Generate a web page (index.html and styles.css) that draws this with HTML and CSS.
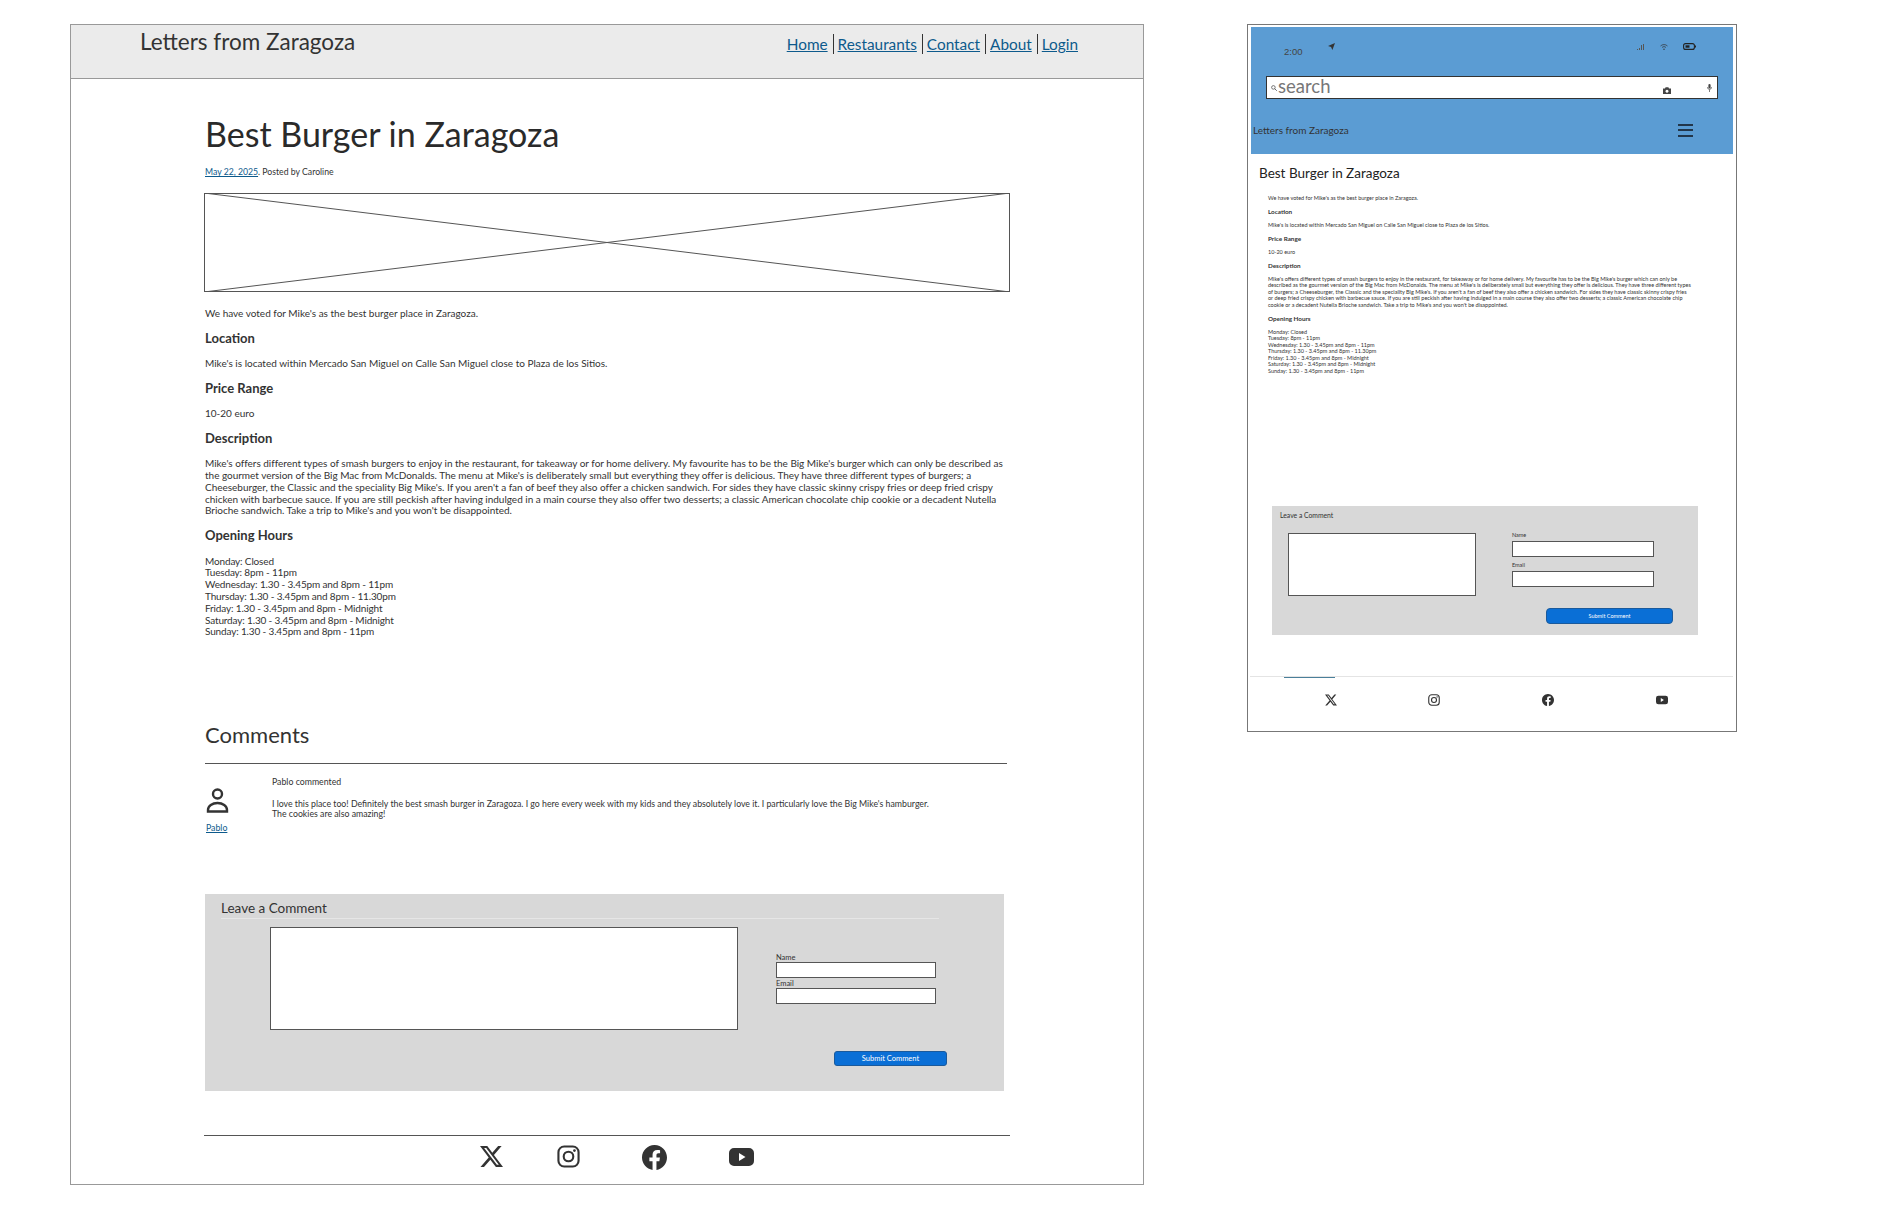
FILE: index.html
```html
<!DOCTYPE html>
<html lang="en">
<head>
  <meta charset="UTF-8">
  <meta name="viewport" content="width=device-width, initial-scale=1.0">
  <title>Letters from Zaragoza</title>
  <link rel="stylesheet" href="styles.css">
</head>
<body>

  <!-- Shared social icons -->
  <svg class="icon-defs" xmlns="http://www.w3.org/2000/svg">
    <symbol id="i-x" viewBox="0 0 16 16">
      <path d="M12.6.75h2.454l-5.36 6.142L16 15.25h-4.937l-3.867-5.07-4.425 5.07H.316l5.733-6.57L0 .75h5.063l3.495 4.633L12.601.75Zm-.86 13.028h1.36L4.323 2.145H2.865z"/>
    </symbol>
    <symbol id="i-instagram" viewBox="0 0 24 24">
      <rect x="1.5" y="1.5" width="21" height="21" rx="6" fill="none" stroke="currentColor" stroke-width="2.2"/>
      <circle cx="12" cy="12" r="5" fill="none" stroke="currentColor" stroke-width="2.2"/>
      <circle cx="18.2" cy="5.8" r="1.4"/>
    </symbol>
    <symbol id="i-facebook" viewBox="0 0 16 16">
      <path d="M16 8.049c0-4.446-3.582-8.05-8-8.05C3.58 0-.002 3.603-.002 8.05c0 4.017 2.926 7.347 6.75 7.951v-5.625h-2.03V8.05H6.75V6.275c0-2.017 1.195-3.131 3.022-3.131.876 0 1.791.157 1.791.157v1.98h-1.009c-.993 0-1.303.621-1.303 1.258v1.51h2.218l-.354 2.326H9.25V16c3.824-.604 6.75-3.934 6.75-7.951"/>
    </symbol>
    <symbol id="i-youtube" viewBox="0 0 25 18">
      <path fill-rule="evenodd" d="M5 0h15a5 5 0 0 1 5 5v8a5 5 0 0 1-5 5H5a5 5 0 0 1-5-5V5a5 5 0 0 1 5-5Zm5 5v8l6.500-4Z"/>
    </symbol>
  </svg>

  <div class="board">

    <!-- Desktop wireframe -->
    <section class="desktop">
      <header class="site-header">
        <div class="site-title">Letters from Zaragoza</div>
        <nav class="site-nav">
          <a href="#">Home</a>
          <a href="#">Restaurants</a>
          <a href="#">Contact</a>
          <a href="#">About</a>
          <a href="#">Login</a>
        </nav>
      </header>

      <main class="article">
        <h1>Best Burger in Zaragoza</h1>
        <div class="meta"><a href="#">May 22, 2025</a>. Posted by Caroline</div>
        <svg class="placeholder" viewBox="0 0 806 99" preserveAspectRatio="none">
          <rect x="0.5" y="0.5" width="805" height="98" fill="none" stroke="#555"/>
          <line x1="0" y1="0" x2="806" y2="99" stroke="#555"/>
          <line x1="806" y1="0" x2="0" y2="99" stroke="#555"/>
        </svg>

        <p class="first">We have voted for Mike's as the best burger place in Zaragoza.</p>
        <h3>Location</h3>
        <p>Mike's is located within Mercado San Miguel on Calle San Miguel close to Plaza de los Sitios.</p>
        <h3>Price Range</h3>
        <p>10-20 euro</p>
        <h3>Description</h3>
        <p class="desc">Mike's offers different types of smash burgers to enjoy in the restaurant, for takeaway or for home delivery. My favourite has to be the Big Mike's burger which can only be described as<br>
        the gourmet version of the Big Mac from McDonalds. The menu at Mike's is deliberately small but everything they offer is delicious. They have three different types of burgers; a<br>
        Cheeseburger, the Classic and the speciality Big Mike's. If you aren't a fan of beef they also offer a chicken sandwich. For sides they have classic skinny crispy fries or deep fried crispy<br>
        chicken with barbecue sauce. If you are still peckish after having indulged in a main course they also offer two desserts; a classic American chocolate chip cookie or a decadent Nutella<br>
        Brioche sandwich. Take a trip to Mike's and you won't be disappointed.</p>
        <h3>Opening Hours</h3>
        <p class="hours">Monday: Closed<br>
        Tuesday: 8pm - 11pm<br>
        Wednesday: 1.30 - 3.45pm and 8pm - 11pm<br>
        Thursday: 1.30 - 3.45pm and 8pm - 11.30pm<br>
        Friday: 1.30 - 3.45pm and 8pm - Midnight<br>
        Saturday: 1.30 - 3.45pm and 8pm - Midnight<br>
        Sunday: 1.30 - 3.45pm and 8pm - 11pm</p>

        <!-- Comments -->
        <h2>Comments</h2>
        <div class="comment">
          <div class="comment-user">
            <svg class="avatar" viewBox="0 0 23 25">
              <circle cx="11.500" cy="6" r="4.500" fill="none" stroke="#333" stroke-width="2.400"/>
              <path d="M2 23.500v-1.500a9.500 7 0 0 1 19 0v1.500z" fill="none" stroke="#333" stroke-width="2.400"/>
            </svg>
            <a href="#">Pablo</a>
          </div>
          <div class="comment-body">
            <div class="comment-by">Pablo commented</div>
            <div>I love this place too! Definitely the best smash burger in Zaragoza. I go here every week with my kids and they absolutely love it. I particularly love the Big Mike's hamburger.<br>The cookies are also amazing!</div>
          </div>
        </div>

        <!-- Comment form -->
        <form class="comment-form">
          <div class="form-title">Leave a Comment</div>
          <div class="form-row">
            <div class="fake-textarea"></div>
            <div class="fields">
              <label>Name</label>
              <div class="fake-input"></div>
              <label>Email</label>
              <div class="fake-input"></div>
            </div>
          </div>
          <div class="submit-btn">Submit Comment</div>
        </form>
      </main>

      <footer class="site-footer">
        <svg class="icon-x"><use href="#i-x"/></svg>
        <svg class="icon-ig"><use href="#i-instagram"/></svg>
        <svg class="icon-fb"><use href="#i-facebook"/></svg>
        <svg class="icon-yt"><use href="#i-youtube"/></svg>
      </footer>
    </section>

    <!-- Mobile wireframe -->
    <section class="mobile">
      <div class="m-banner">
        <div class="m-status">
          <span class="m-time">2:00</span>
          <svg class="m-arrow" viewBox="0 0 8 8"><path d="M8 0 0 3.500l3.500 1L5 8z" fill="#333"/></svg>
          <div class="m-status-icons">
            <svg class="m-signal" viewBox="0 0 8 6"><path d="M0 5h1v1H0zM2 4h1v2H2zM4 1h1v5H4zM6 0h1v6H6z" fill="#555"/></svg>
            <svg class="m-wifi" viewBox="0 0 8 6"><path d="M.500 2a5 5 0 0 1 7 0M2 3.400a3 3 0 0 1 4 0" fill="none" stroke="#333" stroke-width=".7"/><circle cx="4" cy="5.200" r=".7" fill="#333"/></svg>
            <svg class="m-battery" viewBox="0 0 13 7"><rect x=".6" y=".6" width="10.800" height="5.800" rx="2" fill="none" stroke="#222" stroke-width="1.100"/><rect x="2.500" y="2.300" width="4" height="2.400" fill="#222"/><rect x="12" y="2.500" width="1" height="2" fill="#222"/></svg>
          </div>
        </div>
        <div class="m-search">
          <svg class="m-search-icon" viewBox="0 0 6 6"><circle cx="2.400" cy="2.400" r="1.800" fill="none" stroke="#444" stroke-width=".7"/><line x1="3.700" y1="3.700" x2="5.800" y2="5.800" stroke="#444" stroke-width=".8"/></svg>
          <span>search</span>
          <svg class="m-camera" viewBox="0 0 8 7"><path fill-rule="evenodd" d="M0 1.500h2L2.600.2h2.800L6 1.500h2V7H0Zm4 1.200a1.500 1.500 0 1 0 .01 0Z" fill="#444"/></svg>
          <svg class="m-mic" viewBox="0 0 5 8"><rect x="1.400" y="0" width="2.200" height="4.500" rx="1.100" fill="#444"/><path d="M.4 3.200a2.100 2.100 0 0 0 4.200 0M2.500 5.500V8" fill="none" stroke="#444" stroke-width=".7"/></svg>
        </div>
        <div class="m-nav">
          <span>Letters from Zaragoza</span>
          <div class="m-burger"><i></i><i></i><i></i></div>
        </div>
      </div>

      <div class="m-article">
        <h2>Best Burger in Zaragoza</h2>
        <div class="m-body">
          <p>We have voted for Mike's as the best burger place in Zaragoza.</p>
          <h3>Location</h3>
          <p>Mike's is located within Mercado San Miguel on Calle San Miguel close to Plaza de los Sitios.</p>
          <h3>Price Range</h3>
          <p>10-20 euro</p>
          <h3>Description</h3>
          <p>Mike's offers different types of smash burgers to enjoy in the restaurant, for takeaway or for home delivery. My favourite has to be the Big Mike's burger which can only be<br>
          described as the gourmet version of the Big Mac from McDonalds. The menu at Mike's is deliberately small but everything they offer is delicious. They have three different types<br>
          of burgers; a Cheeseburger, the Classic and the speciality Big Mike's. If you aren't a fan of beef they also offer a chicken sandwich. For sides they have classic skinny crispy fries<br>
          or deep fried crispy chicken with barbecue sauce. If you are still peckish after having indulged in a main course they also offer two desserts; a classic American chocolate chip<br>
          cookie or a decadent Nutella Brioche sandwich. Take a trip to Mike's and you won't be disappointed.</p>
          <h3>Opening Hours</h3>
          <p>Monday: Closed<br>
          Tuesday: 8pm - 11pm<br>
          Wednesday: 1.30 - 3.45pm and 8pm - 11pm<br>
          Thursday: 1.30 - 3.45pm and 8pm - 11.30pm<br>
          Friday: 1.30 - 3.45pm and 8pm - Midnight<br>
          Saturday: 1.30 - 3.45pm and 8pm - Midnight<br>
          Sunday: 1.30 - 3.45pm and 8pm - 11pm</p>
        </div>
      </div>

      <form class="m-form">
        <div class="m-form-title">Leave a Comment</div>
        <div class="m-form-row">
          <div class="fake-textarea m-textarea"></div>
          <div class="m-fields">
            <label>Name</label>
            <div class="fake-input"></div>
            <label>Email</label>
            <div class="fake-input"></div>
          </div>
        </div>
        <div class="submit-btn m-submit">Submit Comment</div>
      </form>

      <footer class="m-footer">
        <svg class="icon-x"><use href="#i-x"/></svg>
        <svg class="icon-ig"><use href="#i-instagram"/></svg>
        <svg class="icon-fb"><use href="#i-facebook"/></svg>
        <svg class="icon-yt"><use href="#i-youtube"/></svg>
      </footer>
    </section>

  </div>

</body>
</html>
```

FILE: styles.css
```css
/* Basic page styling */
body {
  margin: 0;
  background-color: #fff;
  color: #333;
  font-family: Lato, "Open Sans", sans-serif;
}
a {
  color: #0d5a8c;
}
p, h1, h2, h3 {
  margin: 0;
}
.icon-defs {
  display: none;
}
svg {
  display: block;
  fill: currentColor;
}
.board {
  display: flex;
  align-items: flex-start;
  gap: 103px;
  padding: 24px 0 0 70px;
}

/* Desktop frame */
.desktop {
  box-sizing: border-box;
  width: 1074px;
  height: 1161px;
  border: 1px solid #999;
}
.site-header {
  box-sizing: border-box;
  display: flex;
  justify-content: space-between;
  height: 54px;
  padding: 0 65px 0 69px;
  background-color: #ebebeb;
  border-bottom: 1px solid #999;
}
.site-title {
  margin-top: 4px;
  font-size: 22.500px;
  line-height: 26px;
}
.site-nav {
  display: flex;
  align-items: flex-start;
  margin-top: 9px;
  font-size: 15.350px;
  line-height: 20px;
}
.site-nav a {
  padding: 0 5px 0 4px;
  border-left: 1px solid #333;
}
.site-nav a:first-child {
  border-left: none;
}
.site-nav a:last-child {
  padding-right: 0;
}

/* Article */
.article {
  padding-left: 134px;
  font-size: 10px;
  line-height: 11.800px;
}
.article h1 {
  margin-top: 37px;
  font-size: 34px;
  font-weight: 400;
  line-height: 36px;
  color: #2a2a2a;
}
.meta {
  margin-top: 14px;
  font-size: 8.700px;
  line-height: 12px;
}
.placeholder {
  width: 806px;
  height: 99px;
  margin: 15px 0 0 -1px;
}
.article p {
  margin-bottom: 11px;
}
.article p.first {
  margin-top: 16px;
}
.article p.desc {
  letter-spacing: -0.02px;
}
.article p.hours {
  letter-spacing: -0.15px;
}
.article h3 {
  margin-bottom: 13.300px;
  font-size: 13px;
  font-weight: 700;
  line-height: 14px;
}
.article h2 {
  margin-top: 85px;
  padding-bottom: 16px;
  width: 802px;
  border-bottom: 1px solid #555;
  font-size: 22px;
  font-weight: 400;
  line-height: 24px;
}

/* Comment */
.comment {
  display: flex;
  height: 130px;
  font-size: 8.750px;
  line-height: 10px;
}
.comment-user {
  width: 67px;
  padding-top: 24px;
}
.comment-user a {
  display: block;
  margin-top: 10px;
  padding-left: 1px;
}
.avatar {
  width: 23px;
  height: 25px;
  margin-left: 1px;
}
.comment-body {
  padding-top: 13px;
}
.comment-by {
  margin-bottom: 12px;
}

/* Comment form */
.comment-form {
  box-sizing: border-box;
  width: 799px;
  height: 197px;
  padding: 7px 0 0 16px;
  background-color: #d8d8d8;
}
.form-title {
  width: 718px;
  padding-bottom: 3px;
  border-bottom: 1px solid #e6e6e6;
  font-size: 13.500px;
  line-height: 14px;
}
.form-row {
  display: flex;
  margin-top: 8px;
}
.fake-textarea {
  box-sizing: border-box;
  width: 468px;
  height: 103px;
  margin-left: 49px;
  background-color: #fff;
  border: 1px solid #555;
}
.fields {
  width: 160px;
  margin: 27px 0 0 38px;
  font-size: 7.500px;
  line-height: 8px;
}
.fields label, .m-fields label {
  display: block;
}
.fake-input {
  box-sizing: border-box;
  height: 16px;
  background-color: #fff;
  border: 1px solid #555;
}
.fields .fake-input {
  margin-bottom: 2px;
}
.submit-btn {
  box-sizing: border-box;
  width: 113px;
  height: 15px;
  margin: 21px 0 0 613px;
  background-color: #0a6fd6;
  border: 1px solid #1a5a9c;
  border-radius: 3px;
  color: #fff;
  font-size: 7.500px;
  line-height: 13px;
  text-align: center;
}

/* Footer */
.site-footer {
  display: flex;
  gap: 62px;
  box-sizing: border-box;
  width: 806px;
  height: 50px;
  margin: 44px 0 0 133px;
  padding: 9px 0 0 276px;
  border-top: 1px solid #555;
}
.site-footer .icon-x, .site-footer .icon-ig {
  width: 23px;
  height: 23px;
}
.site-footer .icon-ig {
  margin-left: -8px;
}
.site-footer .icon-fb {
  width: 25px;
  height: 25px;
}
.site-footer .icon-yt {
  width: 25px;
  height: 18px;
  margin-top: 3px;
}

/* Mobile frame */
.mobile {
  box-sizing: border-box;
  width: 490px;
  height: 708px;
  border: 1px solid #777;
}
.m-banner {
  height: 127px;
  margin: 2px 3px 0;
  background-color: #5b9cd3;
}
.m-status {
  display: flex;
  align-items: center;
  height: 49px;
  padding: 0 37px 0 33px;
}
.m-time {
  font-family: "Liberation Sans", sans-serif;
  font-size: 9.500px;
  color: #444;
}
.m-arrow {
  width: 7px;
  height: 7px;
  margin: -10px 0 0 25px;
}
.m-status-icons {
  display: flex;
  align-items: center;
  gap: 15px;
  margin: -10px 0 0 auto;
}
.m-signal {
  width: 8px;
  height: 6px;
}
.m-wifi {
  width: 8px;
  height: 6px;
}
.m-battery {
  width: 13px;
  height: 7px;
}
.m-search {
  box-sizing: border-box;
  display: flex;
  align-items: center;
  width: 452px;
  height: 23px;
  margin-left: 15px;
  padding: 0 5px 0 4px;
  background-color: #fff;
  border: 1px solid #333;
  color: #777;
  font-size: 18.500px;
}
.m-search span {
  margin-top: -4px;
}
.m-search-icon {
  width: 6px;
  height: 6px;
  margin-right: 1px;
}
.m-camera {
  width: 8px;
  height: 7px;
  margin: 6px 0 0 auto;
}
.m-mic {
  width: 5px;
  height: 8px;
  margin-left: 36px;
}
.m-nav {
  display: flex;
  justify-content: space-between;
  align-items: center;
  margin-top: 24px;
  padding: 0 40px 0 2px;
  font-size: 10px;
  line-height: 14px;
}
.m-burger i {
  display: block;
  width: 15px;
  height: 2px;
  margin-bottom: 3.500px;
  background-color: #22364a;
}
.m-burger i:last-child {
  margin-bottom: 0;
}

/* Mobile article */
.m-article {
  padding-left: 11px;
}
.m-article h2 {
  margin-top: 11px;
  font-size: 13.500px;
  font-weight: 400;
  line-height: 16px;
  color: #222;
}
.m-body {
  margin: 13.750px 0 0 9px;
  font-size: 5.500px;
  line-height: 6.500px;
}
.m-body p {
  margin-bottom: 6.750px;
}
.m-body h3 {
  margin-bottom: 6.750px;
  font-size: 6.300px;
  font-weight: 700;
  line-height: 7px;
}
.m-body p:last-child {
  margin-bottom: 0;
}

/* Mobile comment form */
.m-form {
  box-sizing: border-box;
  width: 426px;
  height: 129px;
  margin: 132px 0 0 24px;
  padding: 4px 0 0 8px;
  background-color: #d8d8d8;
}
.m-form-title {
  font-size: 6.800px;
  line-height: 10px;
}
.m-form-row {
  display: flex;
  margin-top: 13px;
}
.m-textarea {
  width: 188px;
  height: 63px;
  margin-left: 8px;
}
.m-fields {
  width: 142px;
  margin: -1px 0 0 36px;
  font-size: 5.500px;
  line-height: 6px;
}
.m-fields .fake-input {
  margin: 3px 0 5px;
}
.m-submit {
  width: 127px;
  height: 16px;
  margin: 12px 0 0 266px;
  border-radius: 4px;
  font-size: 5.500px;
  line-height: 14px;
}

/* Mobile footer */
.m-footer {
  display: flex;
  gap: 102px;
  box-sizing: border-box;
  height: 55px;
  margin: 41px 3px 0 2px;
  padding: 17px 0 0 75px;
  background: linear-gradient(#4a7f9a, #4a7f9a) 34px 0 / 51px 1px no-repeat;
  border-top: 1px solid #e4e4e4;
}
.m-footer svg {
  width: 12px;
  height: 12px;
}
.m-footer .icon-ig {
  margin-left: -11px;
}
```
